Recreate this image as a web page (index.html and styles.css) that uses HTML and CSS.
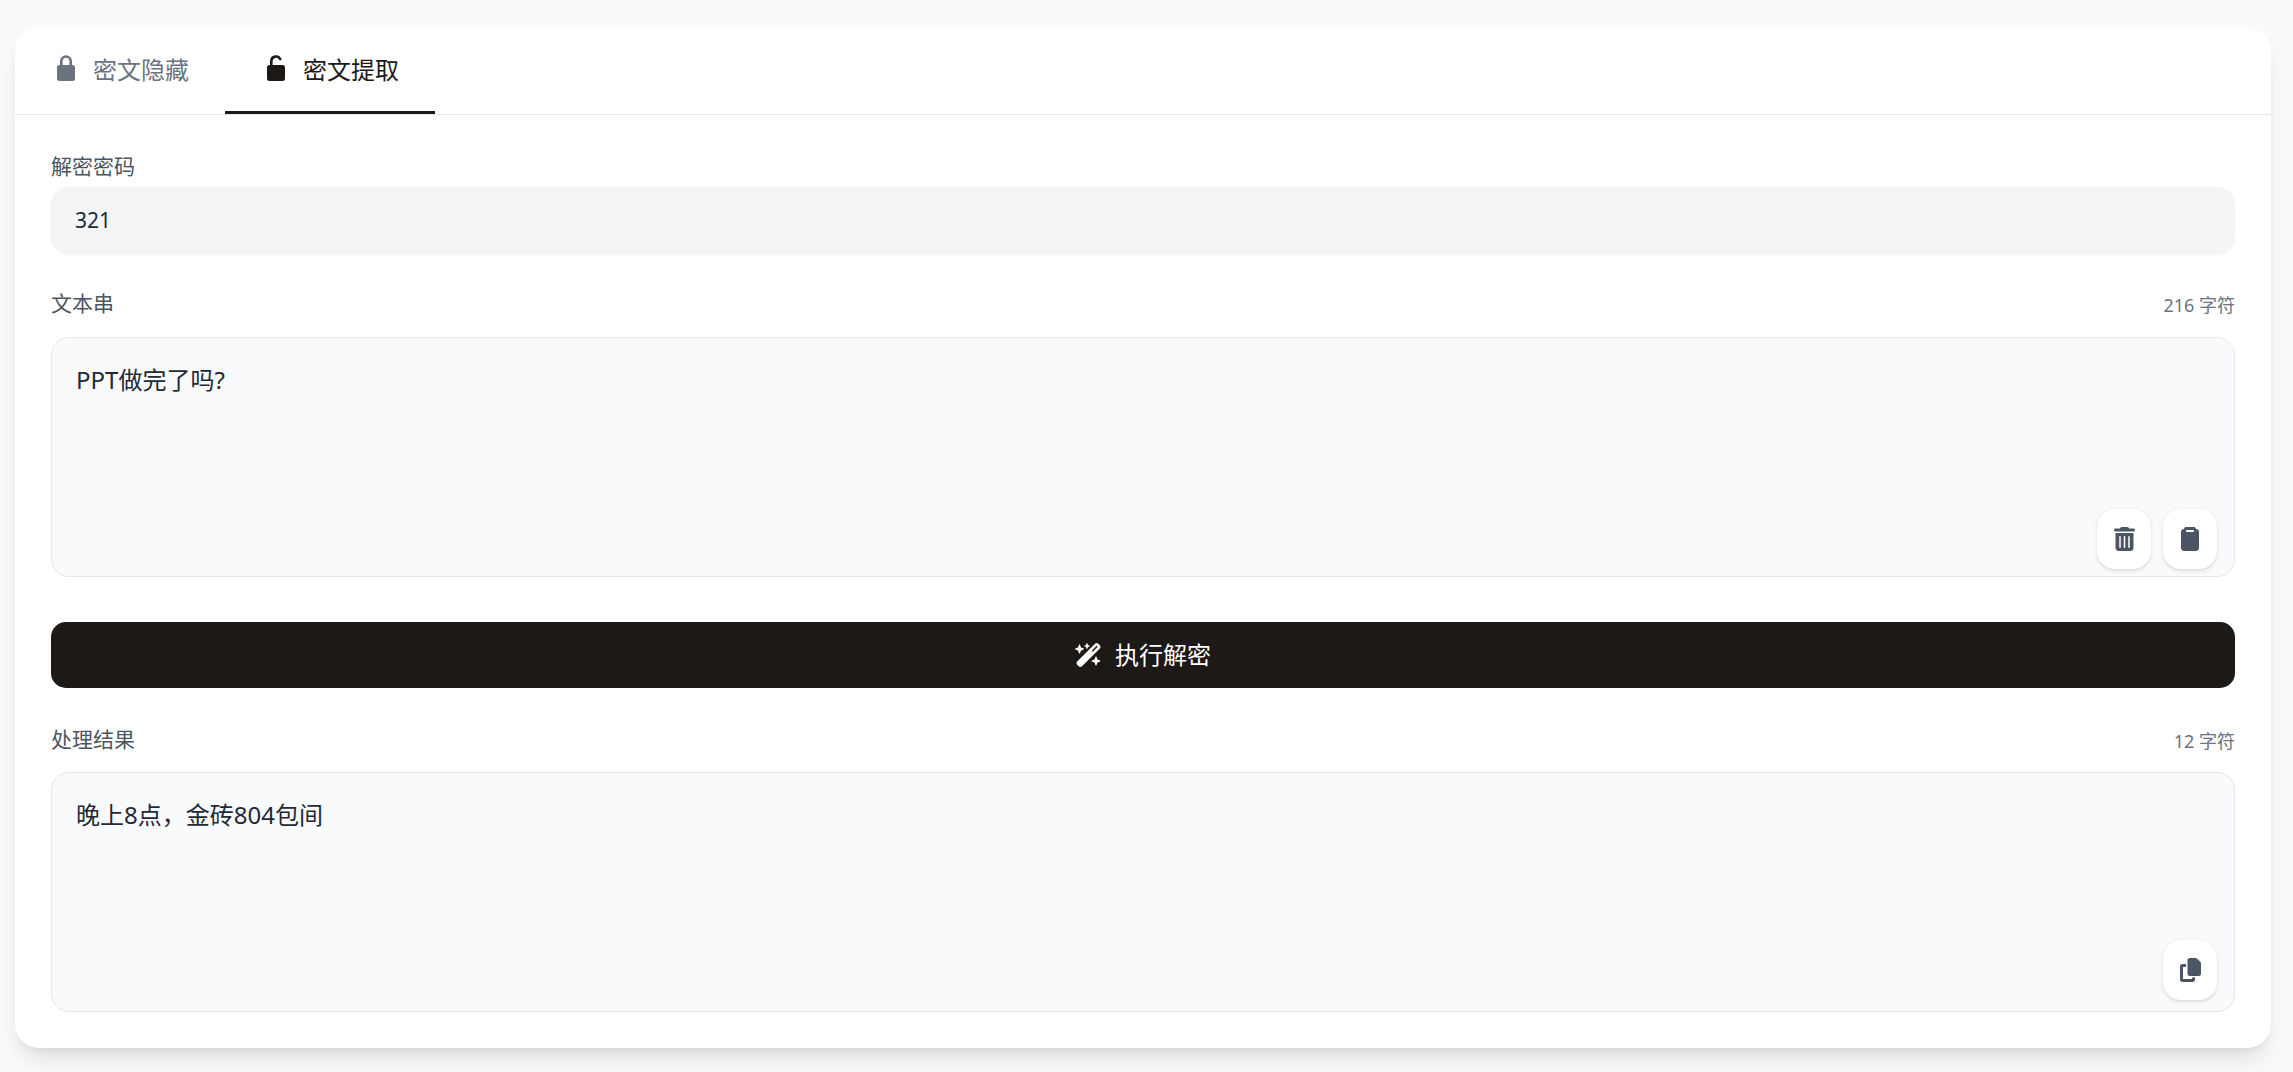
FILE: index.html
```html
<!DOCTYPE html>
<html lang="zh-CN">
<head>
    <meta charset="UTF-8">
    <meta name="viewport" content="width=device-width, initial-scale=1.0">
    <title>密文提取</title>
    <link rel="stylesheet" href="styles.css">
</head>
<body>
    <div class="card">
        <div class="tabs">
            <div class="tab">
                <span class="tab-icon">
                    <svg width="18" height="26" viewBox="0 0 18 26"><path d="M2.500 10h13a2.500 2.500 0 0 1 2.500 2.500v11a2.500 2.500 0 0 1-2.500 2.500h-13A2.500 2.500 0 0 1 0 23.500v-11A2.500 2.500 0 0 1 2.500 10z"/><path class="shackle" d="M4.300 11V6.200a4.700 4.700 0 0 1 9.400 0V11"/></svg>
                </span>
                <span>密文隐藏</span>
            </div>
            <div class="tab active">
                <span class="tab-icon">
                    <svg width="18" height="26" viewBox="0 0 18 26"><path d="M2.500 10h13a2.500 2.500 0 0 1 2.500 2.500v11a2.500 2.500 0 0 1-2.500 2.500h-13A2.500 2.500 0 0 1 0 23.500v-11A2.500 2.500 0 0 1 2.500 10z"/><path class="shackle" d="M4.300 11V6.200a4.700 4.700 0 0 1 8.900-2.100"/></svg>
                </span>
                <span>密文提取</span>
            </div>
        </div>

        <div class="panel">
            <div class="field-label">解密密码</div>
            <div class="password-box">321</div>

            <div class="label-row">
                <span class="row-label">文本串</span>
                <span class="count">216 字符</span>
            </div>
            <div class="text-box">
                PPT做完了吗?
                <div class="tools">
                    <button class="tool" type="button">
                        <svg width="21" height="24" viewBox="0 0 448 512"><path d="M135.200 17.700C140.600 6.800 151.700 0 163.800 0H284.200c12.100 0 23.200 6.800 28.600 17.700L320 32h96c17.700 0 32 14.300 32 32s-14.300 32-32 32H32C14.300 96 0 81.700 0 64S14.300 32 32 32h96l7.200-14.300zM32 128H416V448c0 35.300-28.700 64-64 64H96c-35.300 0-64-28.700-64-64V128zm96 64c-8.800 0-16 7.200-16 16V432c0 8.800 7.200 16 16 16s16-7.200 16-16V208c0-8.800-7.200-16-16-16zm96 0c-8.800 0-16 7.200-16 16V432c0 8.800 7.200 16 16 16s16-7.200 16-16V208c0-8.800-7.200-16-16-16zm96 0c-8.800 0-16 7.200-16 16V432c0 8.800 7.200 16 16 16s16-7.200 16-16V208c0-8.800-7.200-16-16-16z"/></svg>
                    </button>
                    <button class="tool" type="button">
                        <svg width="18" height="24" viewBox="0 0 384 512"><path fill-rule="evenodd" d="M112 0H272c24 0 40 14 48 42 36 0 64 28 64 64V448c0 35.300-28.700 64-64 64H64c-35.300 0-64-28.700-64-64V106C0 70 28 42 64 42 72 14 88 0 112 0zM128 64c-12 0-21 9-21 21s9 21 21 21H256c12 0 21-9 21-21s-9-21-21-21H128z"/></svg>
                    </button>
                </div>
            </div>

            <button class="run-btn" type="button">
                <svg width="27" height="24" viewBox="0 0 576 512"><path d="M234.700 42.700L197 56.800c-3 1.100-5 4-5 7.200s2 6.100 5 7.200l37.700 14.100L248.800 123c1.100 3 4 5 7.200 5s6.100-2 7.200-5l14.100-37.700L315 71.200c3-1.100 5-4 5-7.200s-2-6.100-5-7.200L277.300 42.700 263.200 5c-1.100-3-4-5-7.200-5s-6.100 2-7.200 5L234.700 42.700zM46.100 395.400c-18.700 18.700-18.700 49.100 0 67.900l34.600 34.600c18.700 18.700 49.100 18.700 67.900 0L529.900 116.500c18.700-18.700 18.700-49.100 0-67.900L495.300 14.100c-18.700-18.700-49.100-18.700-67.900 0L46.100 395.400zM484.600 82.600l-105 105-23.300-23.300 105-105 23.300 23.300zM7.500 117.200C3 118.900 0 123.200 0 128s3 9.100 7.500 10.800L64 160l21.200 56.500c1.700 4.500 6 7.500 10.800 7.500s9.100-3 10.800-7.500L128 160l56.500-21.200c4.500-1.700 7.500-6 7.500-10.800s-3-9.100-7.500-10.800L128 96 106.800 39.500C105.100 35 100.800 32 96 32s-9.100 3-10.800 7.500L64 96 7.500 117.200zm352 256c-4.500 1.700-7.500 6-7.500 10.800s3 9.100 7.500 10.800L416 416l21.200 56.500c1.700 4.500 6 7.500 10.800 7.500s9.100-3 10.800-7.500L480 416l56.500-21.200c4.500-1.700 7.500-6 7.500-10.800s-3-9.100-7.500-10.800L480 352l-21.200-56.500c-1.700-4.500-6-7.500-10.800-7.500s-9.100 3-10.800 7.500L416 352l-56.500 21.200z"/></svg>
                <span class="run-text">执行解密</span>
            </button>

            <div class="label-row result-row">
                <span class="row-label">处理结果</span>
                <span class="count">12 字符</span>
            </div>
            <div class="text-box">
                晚上8点，金砖804包间
                <div class="tools tools-raised">
                    <button class="tool" type="button">
                        <svg width="21" height="24" viewBox="0 0 448 512"><path d="M208 0H332.100c12.700 0 24.900 5.100 33.900 14.100l67.900 67.900c9 9 14.100 21.200 14.100 33.900V336c0 26.500-21.500 48-48 48H208c-26.500 0-48-21.500-48-48V48c0-26.500 21.500-48 48-48zM48 128h80v64H64V448H256V416h64v48c0 26.500-21.500 48-48 48H48c-26.500 0-48-21.500-48-48V176c0-26.500 21.500-48 48-48z"/></svg>
                    </button>
                </div>
            </div>
        </div>
    </div>
</body>
</html>
```

FILE: styles.css
```css
* {
    box-sizing: border-box;
}
body {
    margin: 0;
    padding: 27px 22px 24px 15px;
    background-color: #f9fafb;
    font-family: "Noto Sans", "Noto Sans CJK SC", sans-serif;
    color: #1f2937;
}
.card {
    background-color: #fff;
    border-radius: 24px;
    box-shadow: 0 15px 22px -4px rgba(0, 0, 0, 0.1), 0 6px 9px -6px rgba(0, 0, 0, 0.1);
    overflow: hidden;
}

/* tabs */
.tabs {
    display: flex;
    border-bottom: 1px solid #e5e7eb;
}
.tab {
    display: flex;
    align-items: center;
    gap: 12px;
    height: 87px;
    padding: 0 36px 2px;
    border-bottom: 3px solid transparent;
    font-size: 24px;
    color: #6b7280;
}
.tab.active {
    color: #1c1917;
    border-bottom-color: #1c1917;
}
.tab-icon {
    display: flex;
    justify-content: center;
    width: 30px;
}
.tab-icon svg {
    fill: currentColor;
}
.tab-icon .shackle {
    fill: none;
    stroke: currentColor;
    stroke-width: 2.6;
    stroke-linecap: round;
}

/* form */
.panel {
    padding: 36px;
}
.field-label {
    font-size: 21px;
    line-height: 31.5px;
    margin-bottom: 4.5px;
    color: #4b5563;
}
.password-box {
    height: 67px;
    padding: 0 24px 2px;
    display: flex;
    align-items: center;
    background-color: #f3f4f6;
    border-radius: 18px;
    box-shadow: 0 1px 3px rgba(0, 0, 0, 0.05);
    font-size: 21px;
}
.label-row {
    display: flex;
    justify-content: space-between;
    align-items: flex-end;
    margin-top: 33.5px;
    margin-bottom: 18px;
}
.result-row {
    margin-top: 35.5px;
    margin-bottom: 17px;
}
.row-label {
    font-size: 21px;
    line-height: 31.5px;
    color: #4b5563;
}
.count {
    font-size: 18px;
    line-height: 27px;
    color: #6b7280;
}
.text-box {
    position: relative;
    height: 240px;
    padding: 24px;
    background-color: #f9fafb;
    border: 1px solid #e5e7eb;
    border-radius: 18px;
    font-size: 24px;
    line-height: 36px;
}
.tools {
    position: absolute;
    right: 17px;
    bottom: 7px;
    display: flex;
    gap: 12px;
}
.tools-raised {
    bottom: 11px;
}
.tool {
    display: flex;
    align-items: center;
    justify-content: center;
    width: 54px;
    height: 60px;
    padding: 0;
    background-color: #fff;
    border: none;
    border-radius: 18px;
    box-shadow: 0 1.5px 4.5px rgba(0, 0, 0, 0.1), 0 1.5px 3px -1.5px rgba(0, 0, 0, 0.1);
}
.tool svg {
    fill: #4b5563;
}
.run-btn {
    display: flex;
    align-items: center;
    justify-content: center;
    gap: 13px;
    width: 100%;
    height: 66px;
    margin-top: 45px;
    background-color: #1c1917;
    color: #fff;
    border: none;
    border-radius: 15px;
    font-family: inherit;
    font-size: 24px;
}
.run-btn svg {
    fill: #fff;
}
.run-text {
    margin-bottom: 3px;
}
```
